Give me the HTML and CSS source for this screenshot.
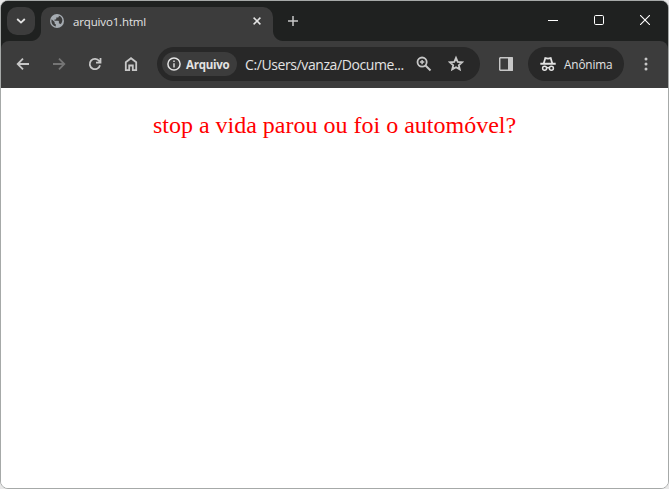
FILE: index.html
```html
<!DOCTYPE html>
<html lang="pt-BR">
<head>
<meta charset="utf-8">
<title>arquivo1.html</title>
<link rel="stylesheet" href="styles.css">
</head>
<body>
<div class="window">
  <header class="titlebar">
    <button class="tab-search" aria-label="Pesquisar guias"><svg width="10" height="6" viewBox="0 0 10 6"><path class="line bold" d="M1.200 1 5 4.600 8.800 1"/></svg></button>
    <div class="tab">
      <svg class="globe" width="14" height="14" viewBox="0 0 14 14"><circle cx="7" cy="7" r="7" fill="#a5abb1"/><path d="M1.600 5.200 4.600 8v1.100c0 .7.5 1.200 1.200 1.200v2.200C3 12 1.400 9.700 1.400 7zM8.800 1.700v.7c0 .7-.5 1.200-1.200 1.200H6.300v1.200c0 .4-.3.700-.7.700H4.500v1.300h3.700c.4 0 .7.300.7.700v1.900h.6c.6 0 1 .3 1.200.8 2.800-3 2-7.400-1.900-8.500z" fill="#3c3c3c"/></svg>
      <span class="tab-title">arquivo1.html</span>
      <svg class="tab-close" width="8" height="8" viewBox="0 0 8 8"><path class="line" d="m.6.6 6.800 6.800m0-6.800L.6 7.400"/></svg>
    </div>
    <svg class="new-tab" width="10" height="10" viewBox="0 0 10 10"><path class="line" d="M5 0v10M0 5h10"/></svg>
    <div class="controls">
      <svg width="10" height="10" viewBox="0 0 10 10"><path d="M0 5h10v1H0z" fill="#fff"/></svg>
      <svg width="10" height="10" viewBox="0 0 10 10"><rect x=".5" y=".5" width="9" height="9" rx="1.200" fill="none" stroke="#fff"/></svg>
      <svg width="10" height="10" viewBox="0 0 10 10"><path d="m0 0 10 10M10 0 0 10" stroke="#fff" stroke-width="1.100"/></svg>
    </div>
  </header>
  <nav class="toolbar">
    <div class="nav-buttons">
      <svg width="18" height="18" viewBox="0 0 18 18"><path class="line bold" d="M15 9H4m5-5.300L3.700 9 9 14.300"/></svg>
      <svg class="disabled" width="18" height="18" viewBox="0 0 18 18"><path class="line bold" d="M3 9h11M9 3.700 14.300 9 9 14.300"/></svg>
      <svg width="18" height="18" viewBox="0 0 18 18"><path class="line bold" d="M14 10.200A5.200 5.200 0 1 1 13.200 6l1 1.300M14.500 3v4.600H10"/></svg>
      <svg width="18" height="18" viewBox="0 0 18 18"><path class="line bold" d="M3.800 7.200 9 3.200l5.200 4v8h-3.400v-4.700H7.200v4.700H3.800z"/></svg>
    </div>
    <div class="address">
      <div class="chip">
        <svg width="14" height="14" viewBox="0 0 14 14"><circle class="line" cx="7" cy="7" r="6.100"/><path d="M6.300 6.200h1.400v4.200H6.300zM6.300 3.600h1.400V5H6.300z"/></svg>
        <span>Arquivo</span>
      </div>
      <span class="url">C:/Users/vanza/Docume...</span>
      <svg class="zoom" width="16" height="16" viewBox="0 0 16 16"><circle class="line bold" cx="6.100" cy="6.100" r="4.600"/><path class="line heavy" d="m9.500 9.500 5 5"/><path class="line" d="M6.100 3.900v4.400M3.900 6.100h4.400"/></svg>
      <svg class="star" width="18" height="18" viewBox="0 0 18 18"><path class="line bold" d="m9 2.900 1.700 4 4.400.4-3.300 2.900 1 4.200L9 12.200l-3.800 2.200 1-4.200-3.300-2.900 4.400-.4z"/></svg>
    </div>
    <svg class="side-panel" width="14" height="14" viewBox="0 0 14 14"><rect class="line" x=".7" y=".7" width="12.600" height="12.600" rx="1"/><path d="M9 0h4.500l.5.500v13l-.5.500H9z"/></svg>
    <div class="incognito">
      <svg width="16" height="14" viewBox="0 0 16 14"><path class="line bold" d="M3.800 6.200 5.300 1.100 8 1.700l2.700-.6 1.500 5.100"/><path class="line heavy" d="M.3 6.800h15.400"/><circle class="line" cx="4.600" cy="11.200" r="2"/><circle class="line" cx="11.400" cy="11.200" r="2"/><path class="line" d="M6.500 11q1.500-.8 3 0"/></svg>
      <span>Anônima</span>
    </div>
    <svg class="menu" width="4" height="14" viewBox="0 0 4 14"><circle cx="2" cy="2" r="1.500"/><circle cx="2" cy="7" r="1.500"/><circle cx="2" cy="12" r="1.500"/></svg>
  </nav>
  <main class="page"><p>stop a vida parou ou foi o automóvel?</p></main>
</div>
</body>
</html>
```

FILE: styles.css
```css
* { box-sizing: border-box; }
body { margin: 0; background: #e8e8e8; font-family: "Open Sans", "Noto Sans", sans-serif; }
svg { display: block; flex: none; fill: #c7c7c7; }
.line { fill: none; stroke: #c7c7c7; stroke-width: 1.500; }
.bold { stroke-width: 1.800; }
.heavy { stroke-width: 2; }
.window { width: 669px; height: 489px; border: 1px solid #a6a9a8; border-radius: 8px; overflow: hidden; background: linear-gradient(#1f2120 60px, #fff 60px); display: flex; flex-direction: column; }
.titlebar { z-index: 1; height: 40px; flex: none; background: #1f2120; display: flex; padding: 6px 18px 0 6px; }
.tab-search { width: 28px; height: 28px; padding: 0; border: 0; border-radius: 10px; background: #3c3c3c; display: grid; place-items: center; }
.tab-search .line, .tab-close .line { stroke: #e3e3e3; }
.tab { position: relative; width: 232px; height: 34px; margin-left: 6px; padding: 0 12px 6px 9px; display: flex; align-items: center; background: #3c3c3c; border-radius: 10px 10px 0 0; }
.tab::before, .tab::after { content: ""; position: absolute; bottom: 0; width: 10px; height: 10px; }
.tab::before { right: 100%; background: radial-gradient(circle at 0 0, transparent 9.500px, #3c3c3c 10.500px); }
.tab::after { left: 100%; background: radial-gradient(circle at 100% 0, transparent 9.500px, #3c3c3c 10.500px); }
.tab-title { margin-left: 9px; padding-top: 1px; font-size: 11.500px; letter-spacing: -.15px; line-height: 16px; color: #e3e3e3; }
.tab-close { margin-left: auto; }
.new-tab { margin: 9px 0 0 15px; }
.controls { display: flex; gap: 36px; margin: 8px 0 0 auto; }
.toolbar { height: 47px; flex: none; background: #3c3c3c; display: flex; align-items: center; padding-bottom: 1px; border-radius: 8px 8px 0 0; }
.nav-buttons { display: flex; gap: 18px; margin-left: 13px; }
.disabled .line { stroke: #757575; }
.address { width: 323px; height: 34px; margin-left: 17px; padding-left: 5px; border-radius: 17px; background: #282828; display: flex; align-items: center; }
.chip { width: 75px; height: 24px; border-radius: 12px; background: #3c3c3c; display: flex; align-items: center; padding-left: 5px; gap: 5px; font-size: 11.500px; font-weight: 700; color: #e3e3e3; letter-spacing: -.25px; }
.chip svg { fill: #e3e3e3; }
.chip .line { stroke: #e3e3e3; }
.url { width: 164px; margin-left: 8px; color: #e3e3e3; font-size: 14px; letter-spacing: -.4px; white-space: nowrap; }
.zoom { margin-left: 7px; }
.star { margin-left: 15px; }
.side-panel { margin-left: 19px; }
.incognito { width: 96px; height: 34px; margin-left: 15px; padding-left: 12px; border-radius: 17px; background: #282828; display: flex; align-items: center; gap: 8px; color: #e3e3e3; font-size: 11.800px; letter-spacing: -.15px; }
.incognito .line { stroke: #e3e3e3; }
.menu { margin-left: 20px; }
.page { flex: 1; background: #fff; padding-top: 24px; text-align: center; }
.page p { margin: 0; color: #f00; font: 24px/27px "Liberation Serif", serif; }
```
